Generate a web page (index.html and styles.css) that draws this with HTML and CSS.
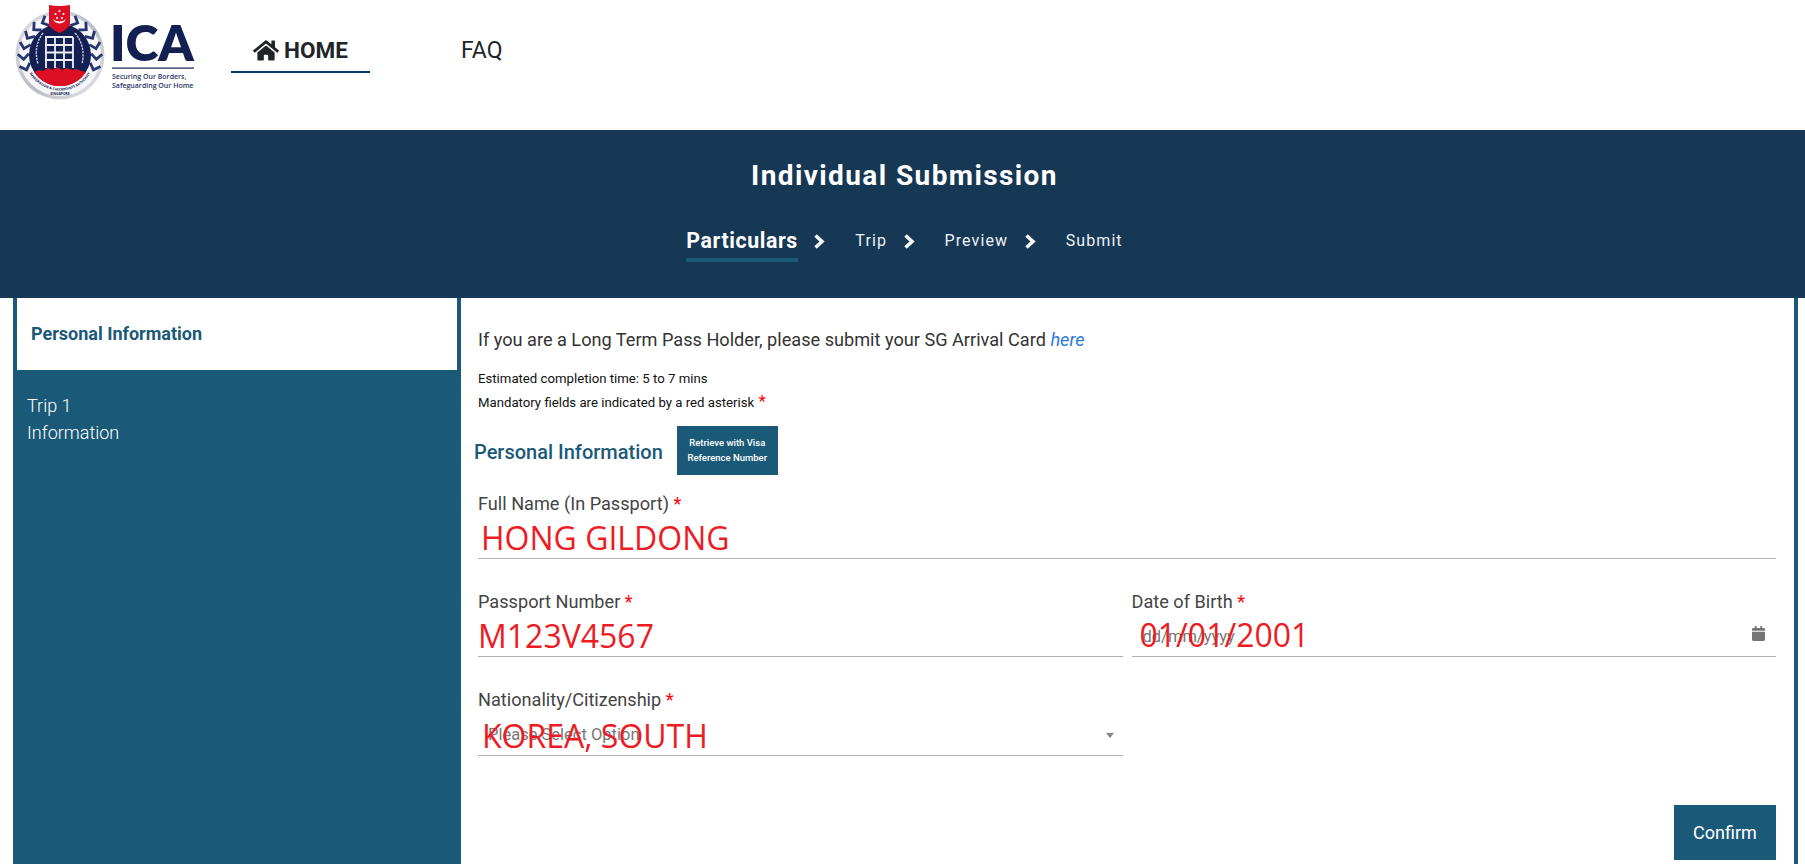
FILE: index.html
```html
<!DOCTYPE html>
<html lang="en">
<head>
<meta charset="utf-8">
<title>Individual Submission</title>
<link rel="stylesheet" href="styles.css">
</head>
<body>
<header class="topbar">
  <svg class="logo" viewBox="0 0 198 100" width="198" height="100" aria-label="ICA logo">
    <defs>
      <linearGradient id="rim" x1="0" y1="0" x2="1" y2="1">
        <stop offset="0" stop-color="#e2e3e7"/><stop offset=".55" stop-color="#b9bcc4"/><stop offset="1" stop-color="#e8e9ec"/>
      </linearGradient>
      <path id="leaf" d="M-5.500 -3 L0 2.500 L5.500 -3" fill="none" stroke="#26356f" stroke-width="2.800"/>
      <g id="wreath">
        <use href="#leaf" transform="translate(44.600 21.900) rotate(65)"/>
        <use href="#leaf" transform="translate(35.600 27.900) rotate(48)"/>
        <use href="#leaf" transform="translate(28.700 36.200) rotate(31)"/>
        <use href="#leaf" transform="translate(24.600 46.200) rotate(14)"/>
        <use href="#leaf" transform="translate(23.500 56.900) rotate(-3)"/>
        <use href="#leaf" transform="translate(25.700 67.500) rotate(-20)"/>
      </g>
      <path id="seal-arc" d="M26.600 67.100 A35.500 35.500 0 0 0 93.400 67.100"/>
    </defs>
    <circle cx="60" cy="55" r="44.500" fill="url(#rim)"/>
    <circle cx="60" cy="55" r="41" fill="#f6f6f8"/>
    <use href="#wreath"/>
    <use href="#wreath" transform="translate(120 0) scale(-1 1)"/>
    <circle cx="60" cy="55" r="31" fill="#141f52"/>
    <path d="M34 72 L39 70 L43 71 L48 68 L52 70 L57 67 L62 70 L67 68 L72 70 L77 69 L81 71 L86 72 A31 31 0 0 1 34 72Z" fill="#dc0f24"/>
    <path d="M45 37H73M45 45H73M45 52.500H73M45 60H73M46 37V68M55 37V68M64 37V68M73 37V68" fill="none" stroke="#eef0f6" stroke-width="1.800"/>
    <g fill="none" stroke="#c9cde0" stroke-width="1.400" stroke-dasharray="2.400 .9">
      <path d="M43 33 Q33 46 38 64"/>
      <path d="M75 33 Q86 46 82 64"/>
    </g>
    <text class="logo-seal"><textPath href="#seal-arc" startOffset="50%" text-anchor="middle">IMMIGRATION &amp; CHECKPOINTS AUTHORITY</textPath></text>
    <text class="logo-seal" x="60" y="95" text-anchor="middle">SINGAPORE</text>
    <path d="M49 5 Q59.500 7 70 5 V24 Q70 28 59.500 33 Q49 28 49 24Z" fill="#dc0f24"/>
    <path d="M53 19 a7 7 0 0 0 13 0 a8 6 0 0 1 -13 0z" fill="#fff"/>
    <g fill="#fff"><circle cx="59.500" cy="11" r="1"/><circle cx="55.500" cy="14" r="1"/><circle cx="63.500" cy="14" r="1"/><circle cx="57" cy="18" r="1"/><circle cx="62" cy="18" r="1"/></g>
    <text class="logo-name" x="110" y="61">ICA</text>
    <rect x="112" y="67.500" width="82" height="1.200" fill="#141f52"/>
    <text class="logo-tag" x="112" y="79">Securing Our Borders,</text>
    <text class="logo-tag" x="112" y="88">Safeguarding Our Home</text>
  </svg>
  <nav class="mainnav">
    <a class="navlink navlink-active">
      <svg class="home-icon" viewBox="0 0 576 512" width="26" height="23"><path d="M280.37 148.26L96 300.11V464a16 16 0 0 0 16 16l112.06-.29a16 16 0 0 0 15.92-16V368a16 16 0 0 1 16-16h64a16 16 0 0 1 16 16v95.64a16 16 0 0 0 16 16.05L464 480a16 16 0 0 0 16-16V300L295.67 148.26a12.19 12.19 0 0 0-15.3 0zM571.6 251.47L488 182.56V44.05a12 12 0 0 0-12-12h-56a12 12 0 0 0-12 12v72.61L318.47 43a48 48 0 0 0-61 0L4.34 251.47a12 12 0 0 0-1.6 16.9l25.5 31A12 12 0 0 0 45.15 301l235.22-193.74a12.19 12.19 0 0 1 15.3 0L530.9 301a12 12 0 0 0 16.9-1.6l25.5-31a12 12 0 0 0-1.8-16.93z"/></svg>
      <span>HOME</span>
    </a>
    <a class="navlink navlink-faq">FAQ</a>
  </nav>
</header>

<section class="banner">
  <h1 class="banner-title">Individual Submission</h1>
  <ol class="steps">
    <li class="step step-current">Particulars</li>
    <li class="chev"><svg viewBox="0 0 12 15" width="12" height="15"><path d="M2.500 1.500 L9 7.500 L2.500 13.500"/></svg></li>
    <li class="step">Trip</li>
    <li class="chev"><svg viewBox="0 0 12 15" width="12" height="15"><path d="M2.500 1.500 L9 7.500 L2.500 13.500"/></svg></li>
    <li class="step">Preview</li>
    <li class="chev"><svg viewBox="0 0 12 15" width="12" height="15"><path d="M2.500 1.500 L9 7.500 L2.500 13.500"/></svg></li>
    <li class="step">Submit</li>
  </ol>
</section>

<main class="shell">
  <aside class="sidebar">
    <div class="side-active">Personal Information</div>
    <div class="side-item">Trip 1<br>Information</div>
  </aside>
  <div class="content">
    <p class="intro">If you are a Long Term Pass Holder, please submit your SG Arrival Card <a class="intro-link">here</a></p>
    <p class="note">Estimated completion time: 5 to 7 mins</p>
    <p class="note">Mandatory fields are indicated by a red asterisk <span class="note-star">*</span></p>
    <div class="section-head">
      <h2 class="section-title">Personal Information</h2>
      <button class="retrieve">Retrieve with Visa Reference Number</button>
    </div>
    <form class="fields">
      <div class="field field-wide">
        <label class="field-label">Full Name (In Passport) <span class="req">*</span></label>
        <div class="field-box"><span class="overlay overlay-name">HONG GILDONG</span></div>
      </div>
      <div class="field">
        <label class="field-label">Passport Number <span class="req">*</span></label>
        <div class="field-box"><span class="overlay overlay-passport">M123V4567</span></div>
      </div>
      <div class="field">
        <label class="field-label">Date of Birth <span class="req">*</span></label>
        <div class="field-box">
          <span class="placeholder placeholder-date">dd/mm/yyyy</span>
          <svg class="calendar" viewBox="0 0 448 512" width="13" height="15"><path d="M12 192h424c6.600 0 12 5.400 12 12v260c0 26.500-21.500 48-48 48H48c-26.500 0-48-21.500-48-48V204c0-6.600 5.400-12 12-12zm436-44v-36c0-26.500-21.500-48-48-48h-48V12c0-6.600-5.400-12-12-12h-40c-6.600 0-12 5.400-12 12v52H160V12c0-6.600-5.400-12-12-12h-40c-6.600 0-12 5.400-12 12v52H48C21.500 64 0 85.500 0 112v36c0 6.600 5.400 12 12 12h424c6.600 0 12-5.400 12-12z"/></svg>
          <span class="overlay overlay-date">01/01/2001</span>
        </div>
      </div>
      <div class="field">
        <label class="field-label">Nationality/Citizenship <span class="req">*</span></label>
        <div class="field-box field-box-select">
          <span class="placeholder placeholder-select">Please Select Option</span>
          <span class="caret"></span>
          <span class="overlay overlay-nation">KOREA, SOUTH</span>
        </div>
      </div>
    </form>
    <div class="actions"><button class="confirm">Confirm</button></div>
  </div>
</main>
</body>
</html>
```

FILE: styles.css
```css
* { box-sizing: border-box; }
html, body { margin: 0; padding: 0; height: 100%; overflow: hidden; background: #fff; }
body { font-family: Roboto, "Liberation Sans", sans-serif; color: #212529; }

/* top bar */
.topbar { height: 130px; display: flex; align-items: flex-start; }
.logo { display: block; flex: none; }
.logo-seal { font: 700 3.400px "Open Sans", sans-serif; fill: #141f52; }
.logo-name { font: 800 50px Lato, "Open Sans", sans-serif; fill: #141f52; }
.logo-tag { font: 600 7px "Open Sans", sans-serif; fill: #2a3566; }
.mainnav { display: flex; margin-left: 33px; padding-top: 29px; }
.navlink { display: flex; align-items: center; justify-content: center; gap: 5px; height: 44px; font-size: 22.500px; color: #212529; }
.navlink-active { width: 139px; font-weight: 700; border-bottom: 2px solid #003a70; }
.navlink-faq { margin-left: 91px; font-size: 23px; font-weight: 400; padding-bottom: 2px; }
.home-icon { fill: #212529; display: block; }

/* banner */
.banner { height: 168px; background: #163854; color: #fff; padding-top: 31px; text-align: center; }
.banner-title { margin: 0; padding-left: 4px; font-size: 28px; line-height: 30px; font-weight: 700; letter-spacing: 1.400px; }
.steps { list-style: none; margin: 35px 0 0; padding: 0 0 0 4px; display: flex; justify-content: center; align-items: flex-start; height: 36px; }
.step { font-size: 16px; line-height: 30px; font-weight: 400; letter-spacing: 1.100px; color: #eef2f6; }
.step-current { font-size: 21.300px; font-weight: 700; letter-spacing: .6px; color: #fff; height: 36px; border-bottom: 4px solid #1a5a78; }
.chev { margin: 7.500px 30px 0 15.500px; height: 15px; }
.chev svg { display: block; fill: none; stroke: #f4f6f8; stroke-width: 3.600; }

/* main */
.shell { display: flex; height: 566px; margin: 0 7px 0 13px; background: #1a5a78; padding: 0 4px; overflow: hidden; }
.sidebar { width: 444px; flex: none; color: #fff; }
.side-active { width: 440px; height: 72px; background: #fff; color: #1a5a78; font-size: 18px; font-weight: 700; line-height: 72px; padding-left: 14px; }
.side-item { padding: 22px 0 0 10px; font-size: 18px; line-height: 27px; font-weight: 300; }

.content { flex: 1; background: #fff; padding: 30px 18px 0 17px; min-width: 0; }
.intro { margin: 0 0 15px; font-size: 18.150px; line-height: 24px; color: #333; font-weight: 400; }
.intro-link { color: #2a7ae2; font-style: italic; }
.note { margin: 0; font-size: 13.200px; line-height: 24px; color: #111; }
.note-star { color: #f00; font-size: 17px; line-height: 0; margin-left: 1px; }
.section-head { display: flex; align-items: center; gap: 14px; margin: 11px 0 0 -4px; }
.section-title { margin: 0; padding-top: 2px; font-size: 20px; font-weight: 500; color: #1a5a78; }
.retrieve { width: 101px; height: 49px; padding: 0 6px; border: 0; background: #1a5a78; color: #fff; font: 500 9.500px/14.500px Roboto, sans-serif; }

.fields { display: grid; grid-template-columns: 1fr 1fr; column-gap: 9px; row-gap: 31px; margin-top: 17px; }
.field-wide { grid-column: 1 / -1; }
.field-label { display: block; font-size: 18.150px; line-height: 24px; color: #444; }
.req { color: #f00; }
.field-box { position: relative; height: 43px; border-bottom: 1px solid #b0b0b0; }
.field-box-select { height: 44px; }
.placeholder { position: absolute; font-size: 16.500px; color: #777; line-height: 20px; }
.placeholder-date { left: 11px; top: 13px; }
.placeholder-select { left: 10px; top: 13px; }
.calendar { position: absolute; right: 11px; top: 12px; fill: #757575; }
.caret { position: absolute; right: 9px; top: 21px; width: 0; height: 0; border: 4px solid transparent; border-top: 5px solid #888; border-bottom: 0; }
.overlay { position: absolute; font-family: "Open Sans", "Noto Sans", sans-serif; font-size: 32px; line-height: 40px; color: #ed1c24; white-space: nowrap; }
.overlay-name { left: 3px; top: 2px; }
.overlay-passport { left: 0; top: 2px; }
.overlay-date { left: 8px; top: 1px; }
.overlay-nation { left: 4px; top: 4px; }

.actions { display: flex; justify-content: flex-end; margin-top: 49px; }
.confirm { width: 102px; height: 55px; border: 0; background: #1a5a78; color: #fff; font: 400 18px Roboto, sans-serif; }
```
